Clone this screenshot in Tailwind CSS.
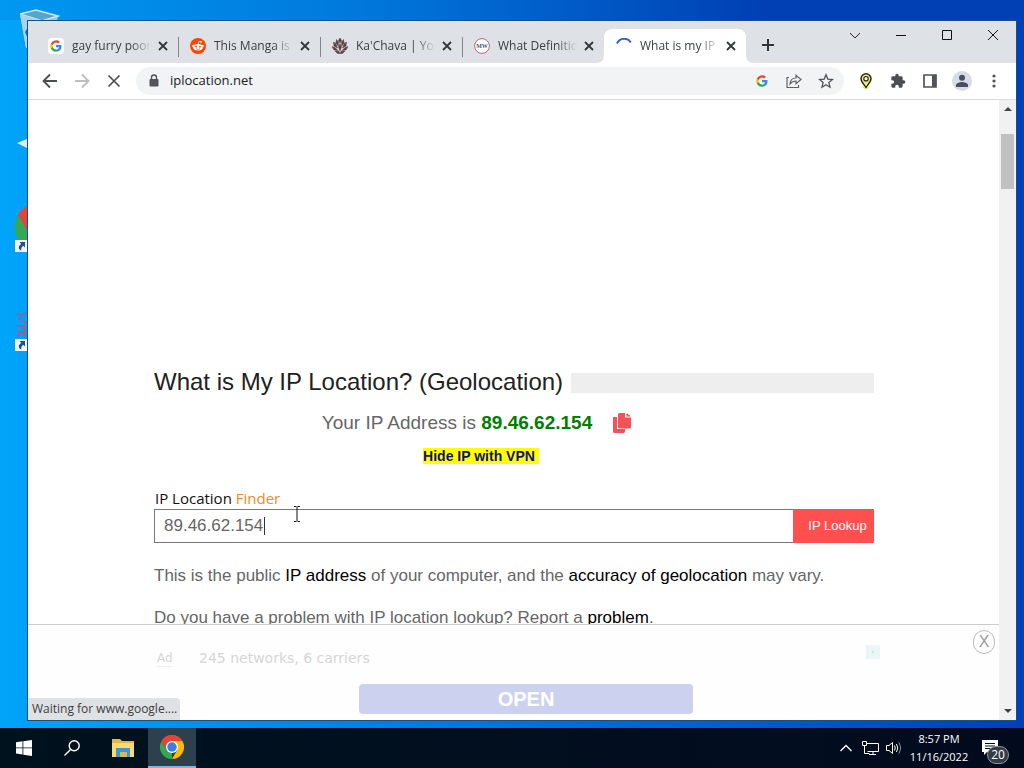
<!DOCTYPE html>
<html lang="en">
<head>
<meta charset="utf-8">
<title>What is my IP</title>
<script src="https://cdn.jsdelivr.net/npm/@tailwindcss/browser@4"></script>
</head>
<body class="h-screen overflow-hidden flex flex-col font-['Open_Sans','Noto_Sans',sans-serif] text-xs text-[#3c4043]">

<svg class="hidden" aria-hidden="true">
  <symbol id="google" viewBox="0 0 24 24">
    <path fill="#4285f4" d="M23 12.3c0-.9-.1-1.600-.2-2.300H12v4.400h6.200a5.300 5.300 0 0 1-2.300 3.500v2.900h3.700c2.200-2 3.400-5 3.400-8.500z"/>
    <path fill="#34a853" d="M12 23.500c3.100 0 5.700-1 7.600-2.800l-3.700-2.900c-1 .7-2.300 1.100-3.900 1.100-3 0-5.500-2-6.400-4.700H1.800v2.900A11.500 11.500 0 0 0 12 23.500z"/>
    <path fill="#fbbc05" d="M5.600 14.200a7 7 0 0 1 0-4.400V6.900H1.800a11.500 11.500 0 0 0 0 10.200z"/>
    <path fill="#ea4335" d="M12 5.100c1.700 0 3.200.6 4.400 1.700l3.300-3.300A11.500 11.500 0 0 0 1.800 6.900l3.800 2.900C6.500 7.100 9 5.100 12 5.100z"/>
  </symbol>
  <symbol id="close" viewBox="0 0 16 16"><path d="M4 4l8 8M12 4l-8 8" stroke="#33373b" stroke-width="1.8"/></symbol>
  <symbol id="chrome" viewBox="0 0 48 48">
    <path fill="#ea4335" d="M24 24 3.200 12A24 24 0 0 1 44.800 12z"/>
    <path fill="#34a853" d="M24 24 24 48A24 24 0 0 1 3.200 12L13.600 30z"/>
    <path fill="#fbbc05" d="M24 12H44.800A24 24 0 0 1 24 48L34.400 30z"/>
    <path fill="#ea4335" d="M24 12H44.800A24 24 0 0 0 3.200 12L13.600 30z"/>
    <circle cx="24" cy="24" r="12" fill="#fff"/><circle cx="24" cy="24" r="9.500" fill="#3b7de9"/>
  </symbol>
  <symbol id="shortcut" viewBox="0 0 12 12"><path fill="#f4f7fa" d="M0 0h12v12H0z"/><path fill="#1f4f94" d="M4.500 2H10v5.500L8.300 5.800C6.500 7 6 8.500 6.300 10.500 3 9 2.800 6 6.300 3.900z"/></symbol>
</svg>

<main class="relative flex-1 min-h-0 flex pt-5 pl-[27px] pr-[7px] pb-[7px] bg-linear-to-r from-[#00a4f8] via-[#0072dc] to-[#0040b8]">
  <div class="absolute inset-x-0 top-0 h-5 bg-linear-to-r from-[#0098f0] via-[#0078dc] via-35% to-[#003fb4] to-75%"></div>

  <svg class="absolute left-5 top-2 w-10 h-10" viewBox="0 0 40 40" aria-hidden="true">
    <path d="M0 6 16 2 38 8 33 40H6z" fill="#8cc8ec"/><path d="M0 6 16 2 38 8 22 13z" fill="#58a4cc" stroke="#cfe6f2" stroke-width="1.500"/><path d="M0 6l22 7-2 27H6z" fill="#a9d3ea"/><path d="M5 24l3-5v12z" fill="#1a6fae"/>
  </svg>
  <svg class="absolute left-[17px] top-[137px] w-5 h-3" viewBox="0 0 20 12" aria-hidden="true"><path d="M0 6 10 2v9z" fill="#dceaf6"/></svg>
  <svg class="absolute left-[15px] top-[203px] size-12" aria-hidden="true"><use href="#chrome"/></svg>
  <svg class="absolute left-[15px] top-60 w-3 h-3" aria-hidden="true"><use href="#shortcut"/></svg>
  <svg class="absolute left-[15px] top-[312px] w-3 h-7" viewBox="0 0 12 28" aria-hidden="true"><path d="M2 2h10M5 2v5l7 4M2 14h7v6H2M10 13v12M1 24l10-5" fill="none" stroke="#8b6695" stroke-width="1.500"/></svg>
  <svg class="absolute left-[15px] top-[339px] w-3 h-3" aria-hidden="true"><use href="#shortcut"/></svg>

  <section class="relative flex-1 min-w-0 flex flex-col bg-white border border-[#1c4f7c]">
    <header class="shrink-0 flex h-[42px] pl-2 bg-[#dee1e6]">
      <nav class="flex items-end min-w-0">
        <div class="relative flex items-center w-[142px] h-[34px] pl-3 pr-[7px] gap-1">
          <svg class="size-4 mr-1 shrink-0 rounded-sm bg-white p-0.5" aria-hidden="true"><use href="#google"/></svg>
          <a href="#" class="flex-1 overflow-hidden whitespace-nowrap mask-r-from-75% mask-r-to-100%">gay furry poon</a>
          <button class="size-4 shrink-0" aria-label="Close tab"><svg class="size-4"><use href="#close"/></svg></button>
          <span class="absolute -right-px top-2 h-5 w-px bg-[#80868b]"></span>
        </div>
        <div class="relative flex items-center w-[142px] h-[34px] pl-3 pr-[7px] gap-1">
          <svg class="size-4 mr-1 shrink-0" viewBox="0 0 16 16" aria-hidden="true"><circle cx="8" cy="8" r="8" fill="#ff4500"/><ellipse cx="8" cy="9.300" rx="4.700" ry="3.300" fill="#fff"/><circle cx="3.400" cy="8" r="1.200" fill="#fff"/><circle cx="12.600" cy="8" r="1.200" fill="#fff"/><circle cx="11" cy="3.800" r="1" fill="#fff"/><path d="M8 6.500l.7-3 2.200.4" fill="none" stroke="#fff" stroke-width=".8"/><circle cx="6.100" cy="8.700" r=".9" fill="#ff4500"/><circle cx="9.900" cy="8.700" r=".9" fill="#ff4500"/><path d="M6 10.800q2 1.200 4 0" fill="none" stroke="#ff4500" stroke-width=".7"/></svg>
          <a href="#" class="flex-1 overflow-hidden whitespace-nowrap mask-r-from-75% mask-r-to-100%">This Manga is</a>
          <button class="size-4 shrink-0" aria-label="Close tab"><svg class="size-4"><use href="#close"/></svg></button>
          <span class="absolute -right-px top-2 h-5 w-px bg-[#80868b]"></span>
        </div>
        <div class="relative flex items-center w-[142px] h-[34px] pl-3 pr-[7px] gap-1">
          <svg class="size-4 mr-1 shrink-0" viewBox="0 0 16 16" fill="#5a4146" aria-hidden="true"><path d="M8 0l1.600 2.500L8 5 6.400 2.500zM4.500 1.500l2 2.500-.3 4-2.400-3zM11.500 1.500l-2 2.500.3 4 2.400-3zM1.500 4l2.400 1.800L5.500 10 2 8zM14.500 4l-2.400 1.800L10.500 10 14 8zM0 8.500l3 1 3 3-4-.5zM16 8.500l-3 1-3 3 4-.5zM8 5.500l1.500 3.500L8 13 6.500 9zM3 13l4 .2L8 16l1-2.800 4-.2-2.500 2.500h-5z" stroke="#5a4146" stroke-width=".5"/></svg>
          <a href="#" class="flex-1 overflow-hidden whitespace-nowrap mask-r-from-75% mask-r-to-100%">Ka'Chava | You</a>
          <button class="size-4 shrink-0" aria-label="Close tab"><svg class="size-4"><use href="#close"/></svg></button>
          <span class="absolute -right-px top-2 h-5 w-px bg-[#80868b]"></span>
        </div>
        <div class="flex items-center w-[142px] h-[34px] pl-3 pr-[7px] gap-1">
          <svg class="size-4 mr-1 shrink-0" viewBox="0 0 16 16" aria-hidden="true"><circle cx="8" cy="8" r="7.400" fill="#fff" stroke="#c0607c"/><text x="8" y="10" text-anchor="middle" font-family="Liberation Serif,serif" font-weight="bold" font-size="6" fill="#375c71">MW</text></svg>
          <a href="#" class="flex-1 overflow-hidden whitespace-nowrap mask-r-from-75% mask-r-to-100%">What Definitio</a>
          <button class="size-4 shrink-0" aria-label="Close tab"><svg class="size-4"><use href="#close"/></svg></button>
        </div>
        <div class="relative flex items-center w-[142px] h-[34px] pl-3 pr-[7px] gap-1 rounded-t-lg bg-white">
          <svg class="absolute -left-2 bottom-0 size-2" viewBox="0 0 8 8" aria-hidden="true"><path d="M8 0v8H0q8 0 8-8z" fill="#fff"/></svg>
          <svg class="absolute -right-2 bottom-0 size-2" viewBox="0 0 8 8" aria-hidden="true"><path d="M0 0v8h8q-8 0-8-8z" fill="#fff"/></svg>
          <svg class="size-4 mr-1 shrink-0" viewBox="0 0 16 16" aria-hidden="true"><path d="M1 5.500A7.800 7.800 0 0 1 14.800 4.500" fill="none" stroke="#2f5fcf" stroke-width="2"/></svg>
          <a href="#" class="flex-1 overflow-hidden whitespace-nowrap mask-r-from-75% mask-r-to-100%">What is my IP</a>
          <button class="size-4 shrink-0" aria-label="Close tab"><svg class="size-4"><use href="#close"/></svg></button>
        </div>
      </nav>
      <button class="mt-2 ml-1.5 size-8 p-2.5" aria-label="New tab"><svg class="size-3" viewBox="0 0 12 12"><path d="M6 0v12M0 6h12" stroke="#303438" stroke-width="2"/></svg></button>
      <div class="ml-auto flex h-7">
        <button class="w-[46px] flex justify-center items-center" aria-label="Search tabs"><svg class="size-3" viewBox="0 0 12 12"><path d="M1 4l5 5 5-5" fill="none" stroke="#222"/></svg></button>
        <button class="w-[46px] flex justify-center items-center" aria-label="Minimize"><svg class="size-3" viewBox="0 0 12 12"><path d="M1 6.500h10" stroke="#111"/></svg></button>
        <button class="w-[46px] flex justify-center items-center" aria-label="Maximize"><svg class="size-3" viewBox="0 0 12 12"><path d="M1.500 1.500h9v9h-9z" fill="none" stroke="#111"/></svg></button>
        <button class="w-[46px] flex justify-center items-center" aria-label="Close window"><svg class="size-3" viewBox="0 0 12 12"><path d="M1 1l10 10M11 1L1 11" stroke="#111"/></svg></button>
      </div>
    </header>

    <div class="shrink-0 flex items-center h-[37px] px-3 border-b border-[#d9dbde]">
      <button class="mr-3 size-5" aria-label="Back"><svg class="size-5" viewBox="0 0 20 20" fill="none" stroke="#4a4e52" stroke-width="1.800"><path d="M17 10H4M10 3.500 3.500 10l6.500 6.500"/></svg></button>
      <button class="mr-3 size-5" aria-label="Forward"><svg class="size-5" viewBox="0 0 20 20" fill="none" stroke="#bcbec1" stroke-width="1.800"><path d="M3 10h13M10 3.500l6.500 6.500-6.500 6.500"/></svg></button>
      <button class="mr-3 size-5" aria-label="Stop"><svg class="size-5" viewBox="0 0 20 20" stroke="#4a4e52" stroke-width="1.700"><path d="M4.500 4.500l11 11M15.500 4.500l-11 11"/></svg></button>
      <div class="flex-1 min-w-0 flex items-center h-7 pl-3 pr-2.5 rounded-full bg-[#f1f3f4]">
        <svg class="w-3 h-4 shrink-0 mr-2.5" viewBox="0 0 12 16" aria-hidden="true"><path d="M3.500 7V4.500a2.500 2.500 0 0 1 5 0V7" fill="none" stroke="#505458" stroke-width="1.400"/><rect x="1.500" y="6" width="9" height="7.500" rx="1" fill="#505458"/></svg>
        <input aria-label="Address" class="flex-1 min-w-0 bg-transparent text-[13px] text-[#202124] outline-none" value="iplocation.net">
        <button class="mr-4 size-4 p-0.5" aria-label="Google"><svg class="size-3"><use href="#google"/></svg></button>
        <button class="mr-4 size-4" aria-label="Share"><svg class="size-4" viewBox="0 0 16 16" fill="none" stroke="#5f6368" stroke-width="1.200"><path d="M3 4.500H1v10h11.500V12M4 11c.3-4 2.500-6 6-6V2.300L15 6.500l-5 4.200V8C7.500 8 5.500 9 4 11z"/></svg></button>
        <button class="size-4" aria-label="Bookmark"><svg class="size-4" viewBox="0 0 16 16" fill="none" stroke="#4f5357" stroke-width="1.300"><path d="M8 1.800l1.800 4.300 4.700.4-3.600 3.100 1.100 4.600L8 11.700l-4 2.500 1.100-4.600L1.500 6.500l4.700-.4z"/></svg></button>
      </div>
      <div class="flex items-center gap-3 ml-3">
        <button class="size-5 flex items-center justify-center" aria-label="IP location extension"><svg class="w-3 h-4" viewBox="0 0 12 16"><ellipse cx="6" cy="14.500" rx="3" ry="1.300" fill="#f4f02c"/><path d="M6 .8a5 5 0 0 1 5 5c0 3-3 5.500-5 8.700-2-3.200-5-5.700-5-8.700a5 5 0 0 1 5-5z" fill="#f3ef68" stroke="#222" stroke-width="1.400"/><circle cx="6" cy="5.700" r="2.200" fill="#fff" stroke="#222" stroke-width="1.200"/></svg></button>
        <button class="size-5 flex items-center justify-center" aria-label="Extensions"><svg class="size-4" viewBox="0 0 24 24" fill="#4b4f53"><path d="M20.500 11H19V7a2 2 0 0 0-2-2h-4V3.500a2.500 2.500 0 0 0-5 0V5H4a2 2 0 0 0-2 2v3.800h1.500a2.700 2.700 0 0 1 0 5.400H2V20c0 1.100.9 2 2 2h3.800v-1.500a2.700 2.700 0 0 1 5.400 0V22H17a2 2 0 0 0 2-2v-4h1.500a2.500 2.500 0 0 0 0-5z"/></svg></button>
        <button class="size-5 flex items-center justify-center" aria-label="Side panel"><svg class="size-3.5" viewBox="0 0 14 14"><path d="M1 1h12v12H1z" fill="#fff" stroke="#505357" stroke-width="1.700"/><path d="M9 1h4v12H9z" fill="#505357"/></svg></button>
        <button class="size-5 flex items-center justify-center rounded-full bg-[#d9dce8]" aria-label="Profile"><svg class="size-3.5" viewBox="0 0 14 14" fill="#4a4f60"><circle cx="7" cy="3.800" r="3"/><path d="M1 13v-2c0-2 4-3 6-3s6 1 6 3v2z"/></svg></button>
        <button class="size-5 flex items-center justify-center" aria-label="Menu"><svg class="w-1 h-4" viewBox="0 0 4 16" fill="#505458"><circle cx="2" cy="3" r="1.600"/><circle cx="2" cy="8" r="1.600"/><circle cx="2" cy="13" r="1.600"/></svg></button>
      </div>
    </div>

    <div class="flex-1 min-h-0 flex">
      <div class="relative flex-1 min-w-0 overflow-hidden font-['Liberation_Sans',Arial,sans-serif]">
        <article class="pt-[266px] pl-[126px] pr-[125px] text-[17px] leading-6 text-[#666]">
          <div class="flex items-center gap-2 h-8">
            <h1 class="text-2xl text-[#222] whitespace-nowrap">What is My IP Location? (Geolocation)</h1>
            <div class="flex-1 h-5 mt-px bg-[#eee]"></div>
          </div>
          <div class="flex items-center justify-center h-[50px] pr-[74px]">
            <p class="text-[19px]">Your IP Address is <b class="text-[#008000]">89.46.62.154</b></p>
            <button class="ml-5 w-5 h-5" aria-label="Copy"><svg class="size-5" viewBox="0 0 20 20" fill="#f4515b"><path d="M1 4h4v12h8v2.500A1.500 1.500 0 0 1 11.500 20h-9A1.500 1.500 0 0 1 1 18.500z"/><path d="M6 1.500A1.500 1.500 0 0 1 7.500 0H13v4.500h6V14a1.500 1.500 0 0 1-1.500 1.500h-10A1.500 1.500 0 0 1 6 14zM14.500 0L19 3.500h-4.500z"/></svg></button>
          </div>
          <div class="flex justify-center h-4 pr-[66px]"><a href="#" class="pr-1 bg-[#ff0] text-sm leading-4 font-bold text-[#10107c]">Hide IP with VPN</a></div>
          <form class="mt-6">
            <label for="ip" class="block pl-px font-['Open_Sans','Noto_Sans',sans-serif] text-[15px] leading-5 text-[#111]">IP Location <span class="text-[#f08a2c]">Finder</span></label>
            <div class="relative flex h-[34px] mt-px">
              <input id="ip" class="flex-1 min-w-0 border border-r-0 border-[#777] px-[9px] text-[17px] text-[#666] outline-none" value="89.46.62.154">
              <span class="absolute left-[110px] top-2 h-[18px] w-px bg-[#333]"></span>
              <button type="button" class="w-[81px] pl-2 bg-[#ff5050] text-[13px] text-white">IP Lookup</button>
            </div>
          </form>
          <p class="mt-[21px] whitespace-nowrap">This is the public <a href="#" class="text-black">IP address</a> of your computer, and the <a href="#" class="text-black">accuracy of geolocation</a> may vary.</p>
          <p class="mt-[18px] whitespace-nowrap">Do you have a problem with IP location lookup? Report a <a href="#" class="text-black">problem</a>.</p>
        </article>
        <aside class="absolute inset-x-0 bottom-0 h-24 bg-[#fefefe] border-t border-[#ccc] flex flex-col font-['DejaVu_Sans',sans-serif]">
          <div class="flex items-center mt-[23px] pl-[126px] pr-[119px] h-5 text-[#d6d6d6]">
            <span class="w-[45px] pl-[3px] text-xs underline decoration-[#eee] underline-offset-4">Ad</span>
            <span class="text-sm">245 networks, 6 carriers</span>
            <svg class="ml-auto size-3.5 -mt-3" viewBox="0 0 14 14" aria-hidden="true"><path d="M0 0h14v14H0z" fill="#ebf7f6"/><circle cx="7" cy="7" r="1" fill="#bcdedd"/></svg>
          </div>
          <button class="ml-auto mr-[306px] mt-4 w-[334px] h-[30px] shrink-0 rounded-sm bg-[#cdd1f0] font-['Liberation_Sans',sans-serif] text-xl font-bold text-white">OPEN</button>
          <button class="absolute right-1 top-[5px] w-[22px] h-6 rounded-full border border-[#bbb] bg-white font-['Liberation_Sans',sans-serif] text-base leading-5 text-[#999]" aria-label="Close ad">X</button>
        </aside>
        <div class="absolute left-0 bottom-0 h-[22px] w-[152px] pl-1 rounded-tr bg-[#dfe1e4] font-['Open_Sans','Noto_Sans',sans-serif] text-xs leading-[22px] whitespace-nowrap">Waiting for www.google....</div>
        <svg class="absolute left-[265px] top-[405px] w-2 h-[18px]" viewBox="0 0 8 18" aria-hidden="true"><path d="M1 1.500h2.500M4.500 1.500H7M4 2v14M1 16.500h2.500M4.500 16.500H7" stroke="#111" fill="none"/></svg>
      </div>
      <div class="w-[17px] shrink-0 flex flex-col items-center bg-[#f1f1f1]">
        <svg class="w-2 h-[17px]" viewBox="0 0 8 17" aria-hidden="true"><path d="M0 11l4-4 4 4z" fill="#444"/></svg>
        <div class="mt-[17px] w-[13px] h-[55px] bg-[#c1c1c1]"></div>
        <svg class="mt-auto w-2 h-[17px]" viewBox="0 0 8 17" aria-hidden="true"><path d="M0 6l4 4 4-4z" fill="#444"/></svg>
      </div>
    </div>
  </section>
</main>

<footer class="shrink-0 flex h-10 bg-linear-to-r from-[#00121e] to-[#020b1e] text-white">
  <button class="w-12 flex items-center justify-center" aria-label="Start"><svg class="size-4" viewBox="0 0 16 16" fill="#fff"><path d="M0 2.300l6.500-1v6.200H0zM7.300 1.200L16 0v7.500H7.300zM0 8.300h6.500v6.300l-6.500-1zM7.300 8.300H16V16l-8.700-1.200z"/></svg></button>
  <button class="w-12 flex items-center justify-center" aria-label="Search"><svg class="size-4" viewBox="0 0 16 16" fill="none" stroke="#fff" stroke-width="1.400"><circle cx="10.200" cy="5.800" r="5"/><path d="M6.600 9.400L.5 15.500"/></svg></button>
  <button class="w-[52px] flex items-center justify-center pl-0.5" aria-label="File Explorer"><svg class="w-[22px] h-5" viewBox="0 0 22 20"><path d="M0 1h8l2 2h12v16H0z" fill="#e8b63c"/><path d="M0 5h22v14H0z" fill="#fbd97b"/><path d="M4 10h14v9h-3v-5H8v5H4z" fill="#4197cc"/><path d="M8 14h7v5H8z" fill="#d6b860"/></svg></button>
  <button class="w-12 flex items-center justify-center bg-[#2c414d] border-b-2 border-[#76b9ed]" aria-label="Google Chrome"><svg class="size-6"><use href="#chrome"/></svg></button>
  <div class="ml-auto flex items-center">
    <button class="w-6 flex justify-center" aria-label="Show hidden icons"><svg class="w-3 h-2" viewBox="0 0 12 8"><path d="M.5 7L6 1.500 11.500 7" fill="none" stroke="#fff" stroke-width="1.300"/></svg></button>
    <button class="w-6 flex justify-center" aria-label="Network"><svg class="w-[17px] h-4" viewBox="0 0 17 16" fill="none" stroke="#fff"><path d="M5 3.500h11.500v8H5.500M11 11.500v3M7 14.500h7M.5 1.500h4v4h-4zM2.500 5.500v8h5"/></svg></button>
    <button class="w-6 flex justify-center" aria-label="Volume"><svg class="size-4" viewBox="0 0 16 16" fill="none" stroke="#fff"><path d="M.5 5.500H3l3.500-3v11L3 10.500H.5zM8.500 5.500q1.500 2.500 0 5M10.500 4q2.500 4 0 8"/><path d="M12.800 2.500q3.500 5.500 0 11" stroke="#8a929c"/></svg></button>
    <div class="w-[66px] text-center text-[11px] leading-[18px]"><p>8:57 PM</p><p>11/16/2022</p></div>
    <button class="relative ml-1 w-12 h-10" aria-label="20 notifications"><svg class="absolute left-1.5 top-3 w-4 h-4" viewBox="0 0 16 16"><path d="M0 0h16v12H5l-3 3v-3H0z" fill="#fff"/><path d="M3 3.500h10M3 6h10M3 8.500h7" stroke="#02101e"/></svg><span class="absolute left-[11px] top-[18px] w-[22px] h-[18px] rounded-full border border-[#8d949c] bg-[#343c46] text-xs leading-4">20</span></button>
  </div>
</footer>
</body>
</html>
